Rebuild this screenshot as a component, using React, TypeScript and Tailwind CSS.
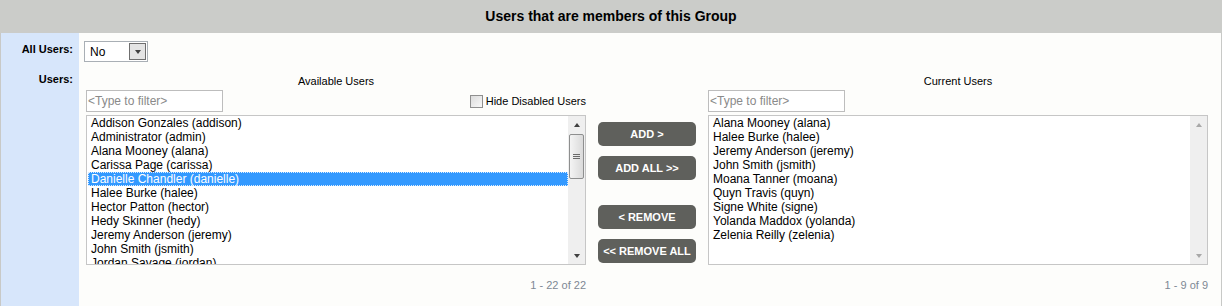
import React from 'react'

const available = [
  'Addison Gonzales (addison)',
  'Administrator (admin)',
  'Alana Mooney (alana)',
  'Carissa Page (carissa)',
  'Danielle Chandler (danielle)',
  'Halee Burke (halee)',
  'Hector Patton (hector)',
  'Hedy Skinner (hedy)',
  'Jeremy Anderson (jeremy)',
  'John Smith (jsmith)',
  'Jordan Savage (jordan)',
]

const current = [
  'Alana Mooney (alana)',
  'Halee Burke (halee)',
  'Jeremy Anderson (jeremy)',
  'John Smith (jsmith)',
  'Moana Tanner (moana)',
  'Quyn Travis (quyn)',
  'Signe White (signe)',
  'Yolanda Maddox (yolanda)',
  'Zelenia Reilly (zelenia)',
]

function Arrow({ dir, light }: { dir: 'up' | 'down'; light?: boolean }) {
  const color = light ? 'border-b-[#a8a8a8] border-t-[#a8a8a8]' : 'border-b-[#404040] border-t-[#404040]'
  return dir === 'up' ? (
    <div className={`h-0 w-0 border-x-[3.5px] border-b-[4px] border-x-transparent ${color}`} />
  ) : (
    <div className={`h-0 w-0 border-x-[3.5px] border-t-[4px] border-x-transparent ${color}`} />
  )
}

function ScrollBar({ disabled }: { disabled?: boolean }) {
  return (
    <div className="flex w-[17px] shrink-0 flex-col bg-[#efefef]">
      <div className="flex h-[17px] items-center justify-center">
        <Arrow dir="up" light={disabled} />
      </div>
      <div className="flex-1 px-[1px] pt-[1px]">
        {!disabled && (
          <div className="flex h-[45px] flex-col items-center justify-center gap-[1px] rounded-[2px] border border-[#8e8f8f] bg-gradient-to-r from-[#f4f4f4] to-[#dadada]">
            <div className="h-[1px] w-[7px] bg-[#6a6a6a]" />
            <div className="h-[1px] w-[7px] bg-[#6a6a6a]" />
            <div className="h-[1px] w-[7px] bg-[#6a6a6a]" />
          </div>
        )}
      </div>
      <div className="flex h-[17px] items-center justify-center">
        <Arrow dir="down" light={disabled} />
      </div>
    </div>
  )
}

function ListBox({ items, selected, disabled }: { items: string[]; selected?: number; disabled?: boolean }) {
  return (
    <div className="flex h-[150px] overflow-hidden border border-[#c6c6c6] bg-white">
      <div className="flex-1 overflow-hidden pl-[1px] font-['Liberation_Sans',sans-serif] text-[12px] leading-[14px] text-black">
        {items.map((it, i) => (
          <div key={it}
            className={i === selected
              ? 'h-[14px] whitespace-nowrap border border-dotted border-[#d9ecff] bg-[#3399ff] pl-[2px] leading-[12px] text-white'
              : 'h-[14px] whitespace-nowrap pl-[3px]'}>
            {it}
          </div>
        ))}
      </div>
      <ScrollBar disabled={disabled} />
    </div>
  )
}

function ActionButton({ label }: { label: string }) {
  return (
    <button type="button"
      className="flex h-[24px] w-[98px] items-center justify-center rounded-[5px] bg-[#5f605c] text-[11px] font-bold text-white">
      {label}
    </button>
  )
}

function FilterInput() {
  return (
    <div className="flex h-[22px] w-[137px] items-center border border-[#bdbdbd] bg-white pl-[1px] text-[12px] text-[#8a8a8a]">
      &lt;Type to filter&gt;
    </div>
  )
}

export default function App() {
  return (
    <div className="w-[1222px] font-['Liberation_Sans',Arial,sans-serif] text-[11px] text-black">
      <div className="flex h-[33px] items-center justify-center bg-[#cbccc9]">
        <h2 className="text-[14px] font-bold text-black">Users that are members of this Group</h2>
      </div>

      <div className="grid h-[273px] grid-cols-[78px_1fr] grid-rows-[33px_1fr] border-x border-[#c8c9c7] bg-[#fdfdfb]">
        {/* All Users */}
        <div className="bg-[#d7e6fb] pr-[6px] pt-[9px] text-right font-bold leading-[14px]">All Users:</div>
        <div className="pl-[5px] pt-[8px]">
          <div className="flex h-[21px] w-[64px] items-center border border-[#a9afb5] bg-white">
            <span className="flex-1 pl-[5px] text-[12px]">No</span>
            <div className="mr-[1px] flex h-[17px] w-[17px] items-center justify-center border border-[#6f6f6f] bg-[#e4e4e4]">
              <Arrow dir="down" />
            </div>
          </div>
        </div>

        {/* Users */}
        <div className="bg-[#d7e6fb] pr-[6px] pt-[6px] text-right font-bold leading-[14px]">Users:</div>
        <div className="flex pl-[7px] pt-[8px]">
          <div className="w-[500px]">
            <p className="h-[14px] text-center leading-[14px]">Available Users</p>
            <div className="mt-[2px] flex items-center justify-between">
              <FilterInput />
              <label className="flex items-center gap-[3px]">
                <span className="h-[13px] w-[13px] border border-[#8f8f8f] bg-gradient-to-br from-[#dcdcdc] to-[#f8f8f8]" />
                <span className="leading-[14px]">Hide Disabled Users</span>
              </label>
            </div>
            <div className="mt-[3px]">
              <ListBox items={available} selected={4} />
            </div>
            <p className="mt-[13px] text-right leading-[14px] text-[#7d8894]">1 - 22 of 22</p>
          </div>

          <div className="mx-[12px] flex w-[98px] flex-col pt-[48px]">
            <ActionButton label="ADD >" />
            <div className="mt-[10px]"><ActionButton label="ADD ALL >>" /></div>
            <div className="mt-[25px]"><ActionButton label="< REMOVE" /></div>
            <div className="mt-[10px]"><ActionButton label="<< REMOVE ALL" /></div>
          </div>

          <div className="w-[500px]">
            <p className="h-[14px] text-center leading-[14px]">Current Users</p>
            <div className="mt-[2px] flex items-center">
              <FilterInput />
            </div>
            <div className="mt-[3px]">
              <ListBox items={current} disabled />
            </div>
            <p className="mt-[13px] text-right leading-[14px] text-[#7d8894]">1 - 9 of 9</p>
          </div>
        </div>
      </div>
    </div>
  )
}
